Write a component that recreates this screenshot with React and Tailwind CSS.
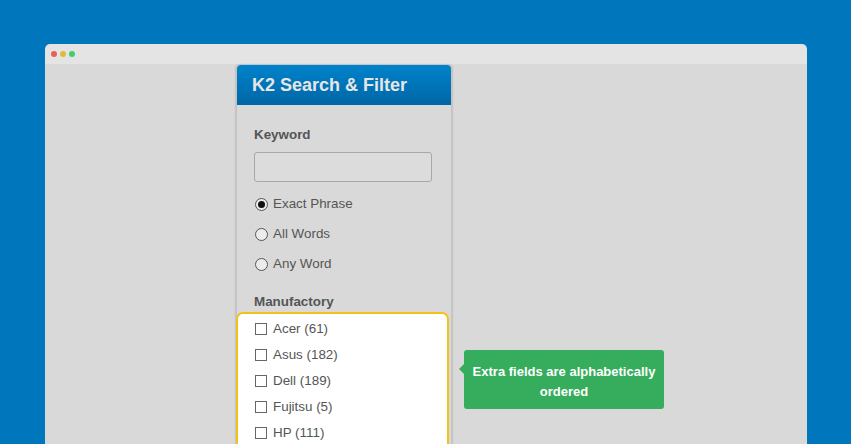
import React from "react";

const radios = [
  { label: "Exact Phrase", checked: true },
  { label: "All Words", checked: false },
  { label: "Any Word", checked: false },
];

const makers = ["Acer (61)", "Asus (182)", "Dell (189)", "Fujitsu (5)", "HP (111)"];

const Radio = ({ checked }) => (
  <span className="w-[13px] h-[13px] rounded-full border border-[#555] bg-[#ececec] flex items-center justify-center">
    {checked && <span className="w-[7px] h-[7px] rounded-full bg-[#111]" />}
  </span>
);

const App = () => {
  return (
    <div
      className="w-[851px] h-[444px] bg-[#0077bc] overflow-hidden pt-[44px] px-[45px]"
      style={{ fontFamily: '"Liberation Sans", Arial, sans-serif' }}
    >
      <div className="h-[420px] rounded-t-[5px] overflow-hidden flex flex-col w-[762px]">
        {/* window bar */}
        <div className="h-[20px] bg-[#e4e4e4] flex items-center gap-[3px] pl-[6px]">
          <span className="w-[6px] h-[6px] rounded-full bg-[#e95e57]" />
          <span className="w-[6px] h-[6px] rounded-full bg-[#e3b93a]" />
          <span className="w-[6px] h-[6px] rounded-full bg-[#3dcf6b]" />
        </div>

        <div className="flex-1 bg-[#d9d9d9] relative pl-[191px] pt-[1px]">
          {/* panel */}
          <div className="w-[216px] h-full rounded-t-[4px] shadow-[0_0_2px_rgba(0,0,0,0.35)] border-x border-[#c4c4c4]">
            <div className="h-[40px] rounded-t-[4px] bg-gradient-to-b from-[#0083cb] to-[#0066a6] flex items-center pl-[15px]">
              <h1 className="text-[18px] font-bold text-[#e6e6e6]">K2 Search &amp; Filter</h1>
            </div>

            <div className="pl-[17px] pt-[22px]">
              <p className="text-[13.4px] font-bold text-[#555] leading-[16px]">Keyword</p>
              <div className="mt-[9px] w-[178px] h-[30px] border border-[#a8a8a8] rounded-[3px] bg-[#dcdcdc]" />

              <div className="mt-[12px] flex flex-col gap-[10px]">
                {radios.map((r) => (
                  <div key={r.label} className="h-[20px] flex items-center gap-[5px] pl-[1px]">
                    <Radio checked={r.checked} />
                    <span className="text-[13.4px] text-[#555]">{r.label}</span>
                  </div>
                ))}
              </div>

              <p className="mt-[20px] text-[13.4px] font-bold text-[#555] leading-[16px]">Manufactory</p>

              <div className="mt-[2px] -ml-[18px] w-[213px] h-[140px] border-2 border-[#f2c21b] rounded-[7px] bg-white pl-[17px] pt-[5px] flex flex-col gap-[6px]">
                {makers.map((m) => (
                  <div key={m} className="h-[20px] flex items-center gap-[6px]">
                    <span className="w-[12px] h-[12px] border border-[#666] bg-white" />
                    <span className="text-[13.4px] text-[#555]">{m}</span>
                  </div>
                ))}
              </div>
            </div>
          </div>

          {/* tooltip */}
          <div className="absolute left-[419px] top-[286px] w-[200px] h-[59px] bg-[#35ad5c] rounded-[3px] flex items-center justify-center text-center pt-[4px]">
            <span className="absolute -left-[5px] top-[14px] w-0 h-0 border-y-[5px] border-y-transparent border-r-[5px] border-r-[#35ad5c]" />
            <p className="text-[13px] font-bold text-white leading-[20px] px-[8px]">
              Extra fields are alphabetically ordered
            </p>
          </div>
        </div>
      </div>
    </div>
  );
};

export default App;
